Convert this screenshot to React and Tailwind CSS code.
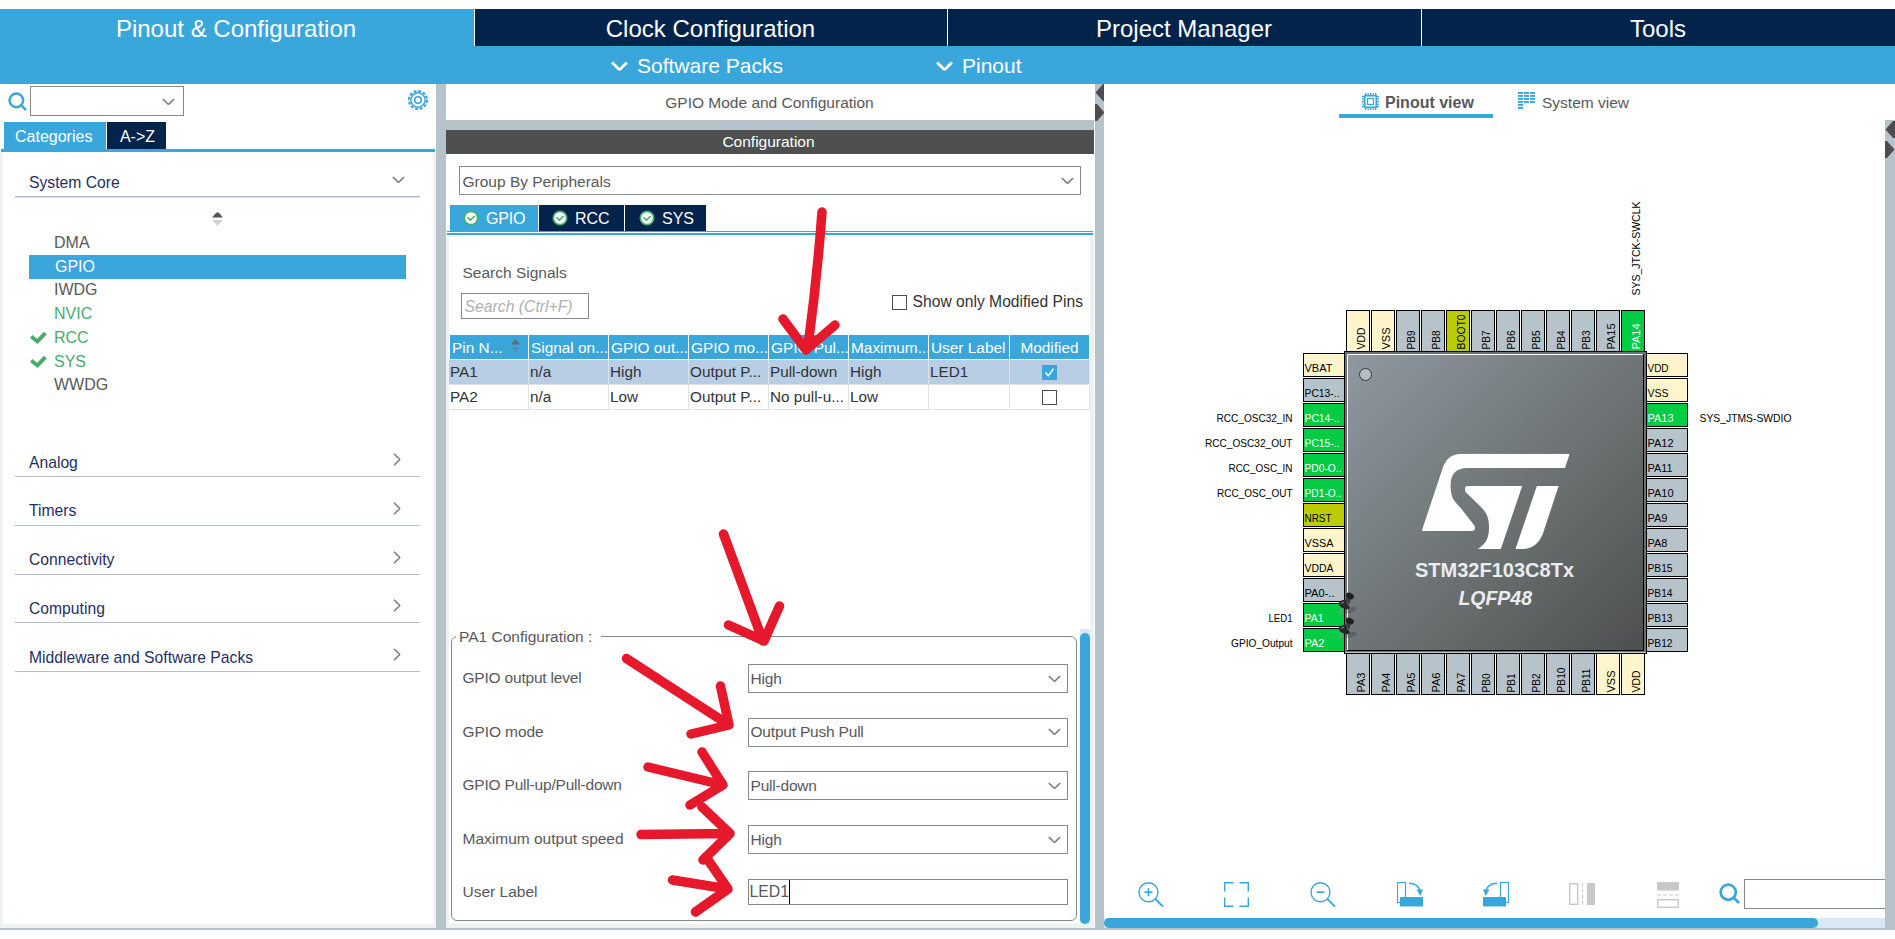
import React from 'react';

const BLUE = '#39a7dc';

function Chevron({ className = '', w = 13, h = 8, color = '#808080', sw = 1.6 }) {
  return (
    <svg className={className} width={w} height={h} viewBox="0 0 13 8" fill="none" stroke={color} strokeWidth={sw}>
      <path d="M0.8 1 L4.6 4.6 Q6.5 7.6 8.4 4.6 L12.2 1" />
    </svg>
  );
}

function ChevronRight() {
  return (
    <svg width="9" height="13" viewBox="0 0 9 13" fill="none" stroke="#808080" strokeWidth="1.6">
      <path d="M1 0.8 L4.8 4.6 Q8.6 6.5 4.8 8.4 L1 12.2" />
    </svg>
  );
}

function SearchIcon({ w = 20, className = '' }) {
  return (
    <svg className={className} width={w} height={w} viewBox="0 0 20 20" fill="none" stroke={BLUE} strokeWidth="2.6">
      <circle cx="8.8" cy="8.8" r="7.2" />
      <path d="M13.4 13.4 L19 19" />
    </svg>
  );
}

function Gear() {
  return (
    <svg width="22" height="22" viewBox="-11 -11 22 22" fill="none" stroke={BLUE}>
      <circle r="9" strokeWidth="2.2" strokeDasharray="2.9 1.81" />
      <circle r="7.2" strokeWidth="1.5" />
      <circle r="3.3" strokeWidth="1.6" />
    </svg>
  );
}

function CircleCheck() {
  return (
    <svg width="16" height="16" viewBox="0 0 16 16" fill="none">
      <circle cx="8" cy="8" r="6.7" fill="#fff" stroke="#45ad6c" strokeWidth="1.7" />
      <path d="M4.6 7.4 L7.4 10.2 L11.6 6" stroke="#45ad6c" strokeWidth="1.6" />
    </svg>
  );
}

function GreenTick() {
  return (
    <svg className="ml-[1px]" width="17" height="14" viewBox="0 0 17 14" fill="none">
      <path d="M1.2 5.6 L7.4 10.4 L15.4 2.2" stroke="#45ad6c" strokeWidth="3.8" />
    </svg>
  );
}

function Splitter({ className }) {
  return (
    <svg className={className} width="10" height="38" viewBox="0 0 10 38" fill="#4d4d4f">
      <path d="M10 0 V17 L8 17 L0.5 8.5 L8 0Z" />
      <path d="M0 20 L2 20 L9.5 28.5 L2 37 L0 37Z" />
    </svg>
  );
}

const mainTabs = ['Pinout & Configuration', 'Clock Configuration', 'Project Manager', 'Tools'];
const groups = ['Analog', 'Timers', 'Connectivity', 'Computing', 'Middleware and Software Packs'];
const core = [
  ['DMA', 'text-[#58585a]'],
  ['GPIO', 'text-white'],
  ['IWDG', 'text-[#58585a]'],
  ['NVIC', 'text-[#45ad6c]'],
  ['RCC', 'text-[#45ad6c]', true],
  ['SYS', 'text-[#45ad6c]', true],
  ['WWDG', 'text-[#58585a]'],
];

function Header() {
  return (
    <header className="shrink-0">
      <div className="mt-[9px] grid h-[37px] grid-cols-[474px_473px_474px_474px] text-[24px] text-white">
        {mainTabs.map((t, i) => (
          <div
            key={t}
            className={
              'flex items-center justify-center pt-[3px] leading-[34px] ' +
              (i === 0 ? 'bg-[#39a7dc] pr-[2px]' : 'border-l border-white bg-[#03234b] pr-[1px]')
            }
          >
            {t}
          </div>
        ))}
      </div>
      <div className="flex h-[38px] items-center bg-[#39a7dc] text-[21px] text-white">
        <Chevron className="ml-[611px] mt-[2px]" w={17} h={11} color="#fff" sw={2.2} />
        <span className="ml-[9px] w-[147px] whitespace-nowrap pt-[2px]">Software Packs</span>
        <Chevron className="ml-[152px] mt-[2px]" w={17} h={11} color="#fff" sw={2.2} />
        <span className="ml-[9px] pt-[2px]">Pinout</span>
      </div>
    </header>
  );
}

function Sidebar() {
  return (
    <aside className="flex w-[436px] shrink-0 flex-col bg-white">
      <div className="flex h-[38px] items-start pl-[8px] pt-[2px]">
        <SearchIcon w={19} className="mt-[6px]" />
        <div className="ml-[3px] flex h-[30px] w-[154px] items-center justify-end border border-[#84898e] pr-[8px]">
          <Chevron className="mt-[1px]" />
        </div>
        <div className="ml-auto mr-[7px] mt-[3px]"><Gear /></div>
      </div>
      <div className="flex h-[27px] gap-[1px] pl-[4px] text-[16px] leading-[29px] text-white">
        <div className="w-[102px] bg-[#39a7dc] pl-[11px]">Categories</div>
        <div className="w-[59px] bg-[#03234b] pl-[2px] text-center">A-&gt;Z</div>
      </div>
      <div className="mx-[1px] h-[3px] bg-[#39a7dc]" />
      <div className="flex-1 border-x-[3px] border-b-[4px] border-[#eff1f3] pl-[12px] pr-[13px] pt-[2px]">
        <div className="flex h-[43px] items-center justify-between border-b border-[#aebccd] pl-[14px] pr-[15px] pt-[15px] text-[15.7px] text-[#1f2f64] shadow-[0_1px_0_#d5dff0]">
          <span>System Core</span>
          <Chevron className="mb-[6px]" />
        </div>
        <div className="ml-[197px] mt-[15px] h-[20px]">
          <svg width="11" height="14" viewBox="0 0 11 14">
            <path d="M0 5.5 H11 L8 2 L5.5 0 L3 2Z" fill="#58585a" />
            <path d="M0 8 H11 L8 11 L5.5 14 L3 11Z" fill="#cfd1d2" />
          </svg>
        </div>
        <ul className="mt-[-1px] pl-[14px] pr-[14px] text-[16px]">
          {core.map(([n, c, tick], i) => (
            <li
              key={n}
              className={
                'flex h-[23.75px] items-center ' + c + (i === 1 ? ' bg-[#39a7dc] pl-[1px]' : '')
              }
            >
              <span className="w-[25px] shrink-0">{tick && <GreenTick />}</span>
              {n}
            </li>
          ))}
        </ul>
        <div className="mt-[31px]">
          {groups.map((g) => (
            <div
              key={g}
              className="flex h-[48.75px] items-end justify-between border-b border-[#b4c1cc] pl-[14px] pr-[18px] text-[15.7px] text-[#1f2f64]"
            >
              <span className="pb-[4.5px] leading-[18px]">{g}</span>
              <span className="pb-[10px]"><ChevronRight /></span>
            </div>
          ))}
        </div>
      </div>
    </aside>
  );
}

const cols = ['Pin N...', 'Signal on...', 'GPIO out...', 'GPIO mo...', 'GPIO Pul...', 'Maximum...', 'User Label', 'Modified'];
const rows = [
  ['PA1', 'n/a', 'High', 'Output P...', 'Pull-down', 'High', 'LED1', true],
  ['PA2', 'n/a', 'Low', 'Output P...', 'No pull-u...', 'Low', '', false],
];
const gridCols = 'grid grid-cols-[80px_80px_80px_80px_80px_80px_81px_80px]';

function Box({ on }) {
  return on ? (
    <svg width="15" height="15" viewBox="0 0 15 15">
      <rect width="15" height="15" fill={BLUE} />
      <path d="M3.5 7.5 L6.3 10.8 L11.5 3.8" fill="none" stroke="#fff" strokeWidth="1.5" />
    </svg>
  ) : (
    <span className="h-[15px] w-[15px] border-[1.5px] border-[#4d4d4f] bg-white" />
  );
}

const fields = [
  ['GPIO output level', 'High', 'tracking-[-0.2px]'],
  ['GPIO mode', 'Output Push Pull', 'tracking-[-0.1px]'],
  ['GPIO Pull-up/Pull-down', 'Pull-down', 'tracking-[-0.2px]'],
  ['Maximum output speed', 'High', ''],
];

function ConfigPanel() {
  return (
    <section className="flex w-[648px] shrink-0 flex-col bg-[#b7c3ca] text-[15.5px] text-[#58585a]">
      <div className="flex h-[36px] items-center justify-center bg-white pr-[1px] pt-[1px]">GPIO Mode and Configuration</div>
      <div className="mt-[10px] flex h-[24px] items-center justify-center bg-[#4e504f] pr-[3px] text-white">Configuration</div>
      <div className="flex flex-1 flex-col bg-white">
        <div className="ml-[13px] mt-[12px] flex h-[29px] w-[622px] items-center justify-between border border-[#84898e] pl-[2.5px] pr-[6px]">
          <span className="pt-[2px]">Group By Peripherals</span>
          <Chevron />
        </div>
        <div className="ml-[4px] mt-[10px] flex h-[26px] gap-[1px] text-[16px] text-white">
          <div className="flex w-[88px] items-center gap-[7px] bg-[#39a7dc] pl-[13px]"><CircleCheck /><span className="pt-[1px] tracking-[-0.2px]">GPIO</span></div>
          <div className="flex w-[85px] items-center gap-[7px] bg-[#03234b] pl-[13px]"><CircleCheck /><span className="pt-[1px]">RCC</span></div>
          <div className="flex w-[81px] items-center gap-[7px] bg-[#03234b] pl-[14px]"><CircleCheck /><span className="pt-[1px]">SYS</span></div>
        </div>
        <div className="mx-[1px] h-[4px] border-b-2 border-t border-[#39a7dc]" />
        <div className="flex flex-1 flex-col border-b-[4px] border-l-[3px] border-r-[4px] border-[#eff1f3]">
          <div className="ml-[13.5px] mt-[29px] leading-[18px]">Search Signals</div>
          <div className="ml-[12px] mt-[11px] flex h-[26px] items-start justify-between">
            <div className="h-[26px] w-[128px] border border-[#84898e] pl-[2.5px] text-[15.75px] italic leading-[25px] text-[#b0b0b0]">Search (Ctrl+F)</div>
            <label className="flex items-center gap-[6px] whitespace-nowrap pr-[7px] text-[15.65px] leading-[16px] text-[#333]"><Box /><span className="leading-[18px]">Show only Modified Pins</span></label>
          </div>
          <div className={gridCols + ' mt-[16px] h-[24px] text-[15.4px] text-white'}>
            {cols.map((c, i) => (
              <div
                key={c}
                className={
                  'flex items-center whitespace-nowrap border-r border-white bg-[#39a7dc] pt-[1px] ' +
                  (i === 7 ? 'justify-center ' : 'pl-[2px] ') + (i === 0 ? 'ml-[1px]' : '')
                }
              >
                {c}
                {i === 0 && (
                  <svg className="mb-[3px] ml-[9px] shrink-0" width="9" height="14" viewBox="0 0 9 14">
                    <path d="M0 5.5 H9 L4.5 0Z" fill="#6a6a6c" />
                    <path d="M0 8 H9 L4.5 13.5Z" fill="#4f8fb3" />
                  </svg>
                )}
              </div>
            ))}
          </div>
          {rows.map((r, k) => (
            <div key={r[0]} className={gridCols + ' text-[15.3px] text-[#333] ' + (k === 0 ? 'mt-[1px] h-[24px] bg-[#b8cee5]' : 'h-[26px] border-t border-[#dfe3e6]')}>
              {r.map((v, i) => (
                <div
                  key={i}
                  className={
                    'flex items-center whitespace-nowrap border-r border-[#dfe3e6] ' +
                    (i === 7 ? 'justify-center pr-[1px]' : 'pl-[1px]') + (k === 1 ? ' border-b' : '')
                  }
                >
                  {i === 7 ? <Box on={v} /> : v}
                </div>
              ))}
            </div>
          ))}
          <div className="mt-auto flex h-[295px] justify-between">
            <div className="relative ml-[2px] mt-[7px] h-[285px] w-[626px] rounded-[6px] border border-[#84898e]">
              <div className="absolute left-[4px] top-[-9px] w-[145px] bg-white pl-[3px] leading-[18px]">PA1 Configuration :</div>
              <div className="flex flex-col pt-[27px]">
                {fields.map(([l, v, tracking]) => (
                  <div key={l} className="flex h-[53.7px] items-start pl-[10.5px]">
                    <span className={'w-[285.5px] pt-[4px] leading-[20px] ' + tracking}>{l}</span>
                    <div className="flex h-[29px] w-[320px] items-center justify-between border border-[#84898e] pl-[1.5px] pr-[6px]">
                      <span className="leading-[20px] tracking-[-0.2px]">{v}</span>
                      <Chevron />
                    </div>
                  </div>
                ))}
                <div className="flex items-start pl-[10.5px]">
                  <span className="w-[285.5px] pt-[3px] leading-[20px]">User Label</span>
                  <div className="flex h-[26px] w-[320px] items-center border border-[#84898e] pl-[0.5px]">
                    <span className="border-r border-black text-[15.8px] leading-[24px]">LED1</span>
                  </div>
                </div>
              </div>
            </div>
            <div className="w-[10px] bg-[#d9e8f5] pt-[4px]">
              <div className="h-[291px] rounded-full bg-[#39a7dc]" />
            </div>
          </div>
        </div>
      </div>
    </section>
  );
}

const G = '#b7c3ca', Y = '#fff5cc', N = '#02cc43', O = '#bbcc00';
const leftPins = [
  ['VBAT', Y, 28], ['PC13-..', G, 35], ['PC14-..', N, 35, 'RCC_OSC32_IN', 76], ['PC15-..', N, 35, 'RCC_OSC32_OUT', 87.5],
  ['PD0-O..', N, 37, 'RCC_OSC_IN', 64], ['PD1-O..', N, 37, 'RCC_OSC_OUT', 75.5], ['NRST', O, 27], ['VSSA', Y, 29],
  ['VDDA', Y, 29], ['PA0-..', G, 30], ['PA1', N, 19, 'LED1', 24], ['PA2', N, 20, 'GPIO_Output', 61.5],
];
const rightPins = [
  ['VDD', Y, 21], ['VSS', Y, 21], ['PA13', N, 26], ['PA12', G, 26], ['PA11', G, 25], ['PA10', G, 26],
  ['PA9', G, 20], ['PA8', G, 20], ['PB15', G, 25], ['PB14', G, 25], ['PB13', G, 25], ['PB12', G, 25],
];
const topPins = [
  ['VDD', Y, 22], ['VSS', Y, 22], ['PB9', G, 19], ['PB8', G, 19], ['BOOT0', O, 35], ['PB7', G, 19],
  ['PB6', G, 19], ['PB5', G, 19], ['PB4', G, 19], ['PB3', G, 19], ['PA15', G, 26], ['PA14', N, 26],
];
const bottomPins = [
  ['PA3', G, 20], ['PA4', G, 20], ['PA5', G, 20], ['PA6', G, 20], ['PA7', G, 20], ['PB0', G, 19],
  ['PB1', G, 19], ['PB2', G, 19], ['PB10', G, 25], ['PB11', G, 24], ['VSS', Y, 22], ['VDD', Y, 22],
];
const ink = (c) => (c === N ? '#ffffff' : '#000000');

function Pushpin({ x, y }) {
  return (
    <g transform={`translate(${x} ${y})`}>
      <ellipse cx="13" cy="18" rx="6" ry="2.6" fill="#000" opacity="0.18" transform="rotate(-20 13 18)" />
      <path d="M4.5 15 L1.2 22.5" stroke="#8a8f93" strokeWidth="1.6" />
      <path d="M0.5 11 Q4 7 7.5 8 L12 16 Q9 18.5 6 16.5 Q1.5 15.5 0.5 11Z" fill="#26292b" />
      <path d="M7 8.5 L9.5 4.5 L13 6.5 L11 13Z" fill="#3a3e41" />
      <ellipse cx="11.8" cy="4" rx="4.2" ry="3" fill="#1d1f21" transform="rotate(25 11.8 4)" />
      <path d="M3 11.5 L6 10" stroke="#8a8f93" strokeWidth="1" />
    </g>
  );
}

function Chip() {
  return (
    <svg className="block" width="781" height="750" viewBox="1104 120 781 750" fontFamily="'Liberation Sans', Arial, sans-serif" fontSize="11">
      <defs>
        <linearGradient id="body" x1="0" y1="0" x2="1" y2="1">
          <stop offset="0" stopColor="#8f99a2" />
          <stop offset="0.5" stopColor="#6f7576" />
          <stop offset="1" stopColor="#4d4f4f" />
        </linearGradient>
      </defs>
      {leftPins.map(([n, c, w, label, lw], i) => (
        <g key={n}>
          <rect x="1303.5" y={353.5 + 25 * i} width="42" height="23" fill={c} stroke="#000" />
          <text x="1304.5" y={372 + 25 * i} fill={ink(c)} textLength={w} lengthAdjust="spacingAndGlyphs">{n}</text>
          {label && <text x={1292.5 - lw} y={372 + 25 * i} textLength={lw} lengthAdjust="spacingAndGlyphs">{label}</text>}
        </g>
      ))}
      {rightPins.map(([n, c, w], i) => (
        <g key={n}>
          <rect x="1645.5" y={353.5 + 25 * i} width="42" height="23" fill={c} stroke="#000" />
          <text x="1647.5" y={372 + 25 * i} fill={ink(c)} textLength={w} lengthAdjust="spacingAndGlyphs">{n}</text>
        </g>
      ))}
      <text x="1699.5" y="422" textLength="92" lengthAdjust="spacingAndGlyphs">SYS_JTMS-SWDIO</text>
      {topPins.map(([n, c, w], i) => (
        <g key={i}>
          <rect x={1346.5 + 25 * i} y="310.5" width="23" height="42" fill={c} stroke="#000" />
          <text transform={`translate(${1365 + 25 * i} 349.5) rotate(-90)`} fill={ink(c)} textLength={w} lengthAdjust="spacingAndGlyphs">{n}</text>
        </g>
      ))}
      <text transform="translate(1640 295.5) rotate(-90)" textLength="94" lengthAdjust="spacingAndGlyphs">SYS_JTCK-SWCLK</text>
      {bottomPins.map(([n, c, w], i) => (
        <g key={i}>
          <rect x={1346.5 + 25 * i} y="652.5" width="23" height="42" fill={c} stroke="#000" />
          <text transform={`translate(${1365 + 25 * i} 692.5) rotate(-90)`} fill={ink(c)} textLength={w} lengthAdjust="spacingAndGlyphs">{n}</text>
        </g>
      ))}
      <rect x="1344.5" y="351.5" width="302" height="302" fill="#6b7076" stroke="#000" />
      <rect x="1347" y="354" width="297" height="297" fill="url(#body)" />
      <path d="M1347.5 650 V354.5 H1643" fill="none" stroke="#fff" strokeWidth="1" />
      <path d="M1643.5 354 V650.5 H1347" fill="none" stroke="#000" strokeWidth="1" />
      <path d="M1345 652.5 H1646" stroke="#c4cace" strokeWidth="1" />
      <circle cx="1365.5" cy="374.5" r="6" fill="#b3bfc7" stroke="#33383b" />
      <svg x="1421.7" y="453.7" width="148" height="95.3" viewBox="586 71 374 286" preserveAspectRatio="none" fill="#fff">
        <path d="M960 71 L948 114 H700 C672 114 658 134 659 170 C660 206 668 212 682 230 L720 288 Q724 302 712 303 H586 L638 118 C646 88 660 71 690 71Z" />
        <path d="M702 168 H840 L786 357 H728 C752 338 757 318 756 285 C755 252 742 238 728 222 L697 186 Q692 168 702 168Z" />
        <path d="M877 168 H932 L892 312 C880 344 864 357 840 357 H823Z" />
      </svg>
      <text x="1415" y="577" fontSize="20" fontWeight="bold" fill="#e9edef" textLength="159">STM32F103C8Tx</text>
      <text x="1458.5" y="605" fontSize="19.5" fontWeight="bold" fontStyle="italic" fill="#e9edef" textLength="73.5">LQFP48</text>
      <Pushpin x={1338} y={592} />
      <Pushpin x={1338} y={617} />
    </svg>
  );
}

function ViewTabs() {
  return (
    <div className="flex h-[36px] pl-[235px] text-[#58585a]">
      <div className="flex h-[34px] w-[154px] items-center border-b-4 border-[#39a7dc] pl-[23px] pt-[6px] text-[16px] font-bold">
        <svg width="17" height="17" viewBox="0 0 17 17" fill="none" stroke={BLUE} className="mb-[2px]">
          <rect x="2.75" y="2.75" width="11.5" height="11.5" strokeWidth="1.6" />
          <rect x="5.5" y="5.5" width="6" height="6" strokeWidth="1.2" />
          <path d="M3 1 H14.5 M3 16 H14.5" strokeWidth="2" strokeDasharray="1.3 1.2" />
          <path d="M1 3 V14.5 M16 3 V14.5" strokeWidth="2" strokeDasharray="1.3 1.2" />
        </svg>
        <span className="ml-[6px] pt-[1px]">Pinout view</span>
      </div>
      <div className="flex items-center pl-[25px] text-[15.5px]">
        <svg width="17" height="17" viewBox="0 0 17 17" fill={BLUE} className="mb-[4px]">
          {[0, 1, 2, 3, 4, 5].map((r) =>
            [0, 1, 2].filter((c) => c === 0 || r < 3 || (r === 3 && c > 0)).map((c) => (
              <rect key={`${r}${c}`} x={c * 6} y={r * 3} width="5" height="1.9" />
            ))
          )}
        </svg>
        <span className="ml-[7px] pt-[1px]">System view</span>
      </div>
    </div>
  );
}

function Zoom({ plus }) {
  return (
    <svg width="26" height="26" viewBox="0 0 26 26" fill="none" stroke={BLUE} strokeWidth="1.4">
      <circle cx="10.5" cy="10.2" r="9.5" />
      <path d="M6.5 10.2 H14.5" strokeWidth="1.7" />
      {plus && <path d="M10.5 6.2 V14.2" strokeWidth="1.7" />}
      <path d="M17 16.7 L25 24.7" strokeWidth="1.9" />
    </svg>
  );
}

function Rotate({ flip }) {
  return (
    <svg width="26" height="26" viewBox="0 0 26 26" fill="none" stroke={BLUE} className={flip ? '-scale-x-100' : ''}>
      <rect x="0.5" y="1.5" width="8" height="20" strokeWidth="1.2" />
      <rect x="3" y="16" width="23" height="9.5" fill={BLUE} stroke="none" />
      <path d="M12 2.2 C18 2.2 21.5 5 23 9.5" strokeWidth="1.6" />
      <path d="M19.5 8.5 H26 L23.4 15Z" fill={BLUE} stroke="none" />
    </svg>
  );
}

function Toolbar() {
  return (
    <div className="flex h-[48px] pl-[34px]">
      <div className="w-[86px] pt-[12px]"><Zoom plus /></div>
      <div className="w-[86px] pt-[12px]">
        <svg width="25" height="25" viewBox="0 0 25 25" fill="none" stroke={BLUE} strokeWidth="1.4">
          <path d="M0.7 9.5 V0.7 H9.5 M15.5 0.7 H24.3 V9.5 M24.3 15.5 V24.3 H15.5 M9.5 24.3 H0.7 V15.5" />
        </svg>
      </div>
      <div className="w-[87px] pt-[12px]"><Zoom /></div>
      <div className="w-[86px] pt-[11px]"><Rotate /></div>
      <div className="w-[86px] pt-[11px]"><Rotate flip /></div>
      <div className="w-[88px] pt-[13px]">
        <svg width="26" height="22" viewBox="0 0 26 22" fill="none" stroke="#c8c8c8">
          <rect x="0.7" y="0.7" width="8" height="20.6" strokeWidth="1.4" />
          <path d="M13.5 0 V22" strokeDasharray="3.5 2.5" strokeWidth="1.2" />
          <rect x="18" width="8" height="22" fill="#c8c8c8" stroke="none" />
        </svg>
      </div>
      <div className="w-[62px] pt-[12px]">
        <svg width="22" height="26" viewBox="0 0 22 26" fill="none" stroke="#c8c8c8">
          <rect width="22" height="8.5" fill="#c8c8c8" stroke="none" />
          <path d="M0 13 H22" strokeDasharray="4 2" strokeWidth="1.2" />
          <rect x="0.7" y="17.7" width="20.6" height="7.6" strokeWidth="1.4" />
        </svg>
      </div>
      <SearchIcon w={21} className="mt-[13px] shrink-0" />
      <div className="ml-[4px] mt-[9px] h-[30px] flex-1 border border-r-0 border-[#84898e]" />
    </div>
  );
}

const arrows = [
  'M822 212 Q817 280 808 346 M783 319 L806 350 L835 325',
  'M723.5 534 L763 641 M728.5 625 L764 641 L779.5 606',
  'M626.5 658.5 L729 725 M720.5 686 L729 725 L691 734',
  'M648 767 L723 785 M702 752 L723 785 L690 805',
  'M641 834.5 L730 833.5 M702 807 L730 833.5 L703 860',
  'M672.5 880 L728 889 M706 857 L728 889 L695.5 912',
];

export default function App() {
  return (
    <div className="relative flex h-[939px] w-[1895px] flex-col overflow-hidden bg-[#fefefe] font-['Liberation_Sans',Arial,sans-serif]">
      <Header />
      <main className="flex h-[846px] shrink-0 border-b-2 border-[#b7c3ca]">
        <Sidebar />
        <div className="w-[10px] shrink-0 bg-[#b7c3ca]" />
        <ConfigPanel />
        <div className="w-[10px] shrink-0 border-l border-white bg-[#b7c3ca]"><Splitter /></div>
        <section className="flex min-w-0 flex-1 flex-col bg-white">
          <ViewTabs />
          <div className="flex flex-1">
            <div className="flex w-[781px] shrink-0 flex-col">
              <Chip />
              <Toolbar />
              <div className="h-[10px] bg-[#d9e8f5]">
                <div className="h-[10px] w-[714px] rounded-full bg-[#39a7dc]" />
              </div>
            </div>
            <div className="w-[10px] bg-[#b7c3ca]"><Splitter className="mt-[1px]" /></div>
          </div>
        </section>
      </main>
      <svg className="pointer-events-none absolute left-0 top-0" width="1895" height="939" viewBox="0 0 1895 939" fill="none" stroke="#e5182c" strokeWidth="9.5" strokeLinecap="round" strokeLinejoin="round">
        {arrows.map((d) => <path key={d} d={d} />)}
      </svg>
    </div>
  );
}
